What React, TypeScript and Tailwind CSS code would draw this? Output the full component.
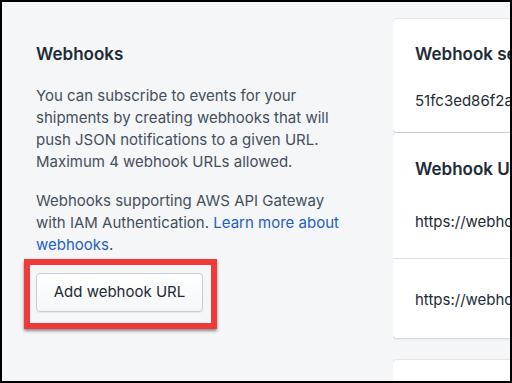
import React from 'react'

const font = { fontFamily: 'Inter, "Noto Sans", sans-serif' }

function Card({ children }: { children: React.ReactNode }) {
  return (
    <div className="w-[320px] rounded-[4px] bg-white shadow-[0_0_0_1px_rgba(63,63,68,0.06),0_1px_3px_rgba(63,63,68,0.15)]">
      {children}
    </div>
  )
}

export default function App() {
  return (
    <div
      className="w-[512px] h-[383px] overflow-hidden border-t-2 border-l-2 border-r-2 border-b-2 border-black bg-[#f4f6f8] flex"
      style={font}
    >
      {/* left: description */}
      <div className="w-[391px] shrink-0 pl-[34px] pr-[40px] pt-[40px]">
        <h2 className="text-[17px] leading-[24px] font-semibold text-[#212b36]">Webhooks</h2>
        <p className="mt-[19px] text-[15px] leading-[22px] text-[#454f5b]">
          You can subscribe to events for your shipments by creating webhooks that will push JSON
          notifications to a given URL. Maximum 4 webhook URLs allowed.
        </p>
        <p className="mt-[17px] text-[15px] leading-[22px] text-[#454f5b]">
          Webhooks supporting AWS API Gateway with IAM Authentication.{' '}
          <a className="text-[#1f5fc2]">Learn more about webhooks</a>.
        </p>
        <div className="-ml-[12px] mt-[3px] inline-block border-[6px] border-[#f03a3a] pl-[6px] pt-[8px] pr-[8px] pb-[11px] shadow-[0_2px_3px_rgba(0,0,0,0.45)]">
          <button className="h-[39px] w-[167px] rounded-[4px] border border-[#c4cdd5] bg-gradient-to-b from-white to-[#f6f7f9] text-[15px] text-[#212b36] shadow-[0_1px_0_rgba(22,29,37,0.05)]">
            Add webhook URL
          </button>
        </div>
      </div>

      {/* right: settings cards */}
      <div className="flex-1 overflow-hidden pt-[17px] flex flex-col gap-[1px]">
        <Card>
          <div className="px-[22px] pt-[23px] pb-[21px]">
            <h3 className="text-[17px] leading-[24px] font-semibold text-[#212b36] whitespace-nowrap">Webhook secret</h3>
            <p className="mt-[25px] text-[15px] leading-[20px] text-[#212b36] whitespace-nowrap">51fc3ed86f2a9b7c41e0</p>
          </div>
        </Card>
        <Card>
          <div className="px-[22px] pt-[24px] pb-[26px]">
            <h3 className="text-[17px] leading-[24px] font-semibold text-[#212b36] whitespace-nowrap">Webhook URLs</h3>
            <p className="mt-[31px] text-[15px] leading-[20px] text-[#212b36] whitespace-nowrap">https://webhooks.example.com/1</p>
          </div>
          <div className="border-t border-[#dfe3e8] px-[22px] pt-[31px] pb-[28px]">
            <p className="text-[15px] leading-[20px] text-[#212b36] whitespace-nowrap">https://webhooks.example.com/2</p>
          </div>
        </Card>
        <div className="mt-[21px]">
          <Card>
            <div className="h-[60px]" />
          </Card>
        </div>
      </div>
    </div>
  )
}
